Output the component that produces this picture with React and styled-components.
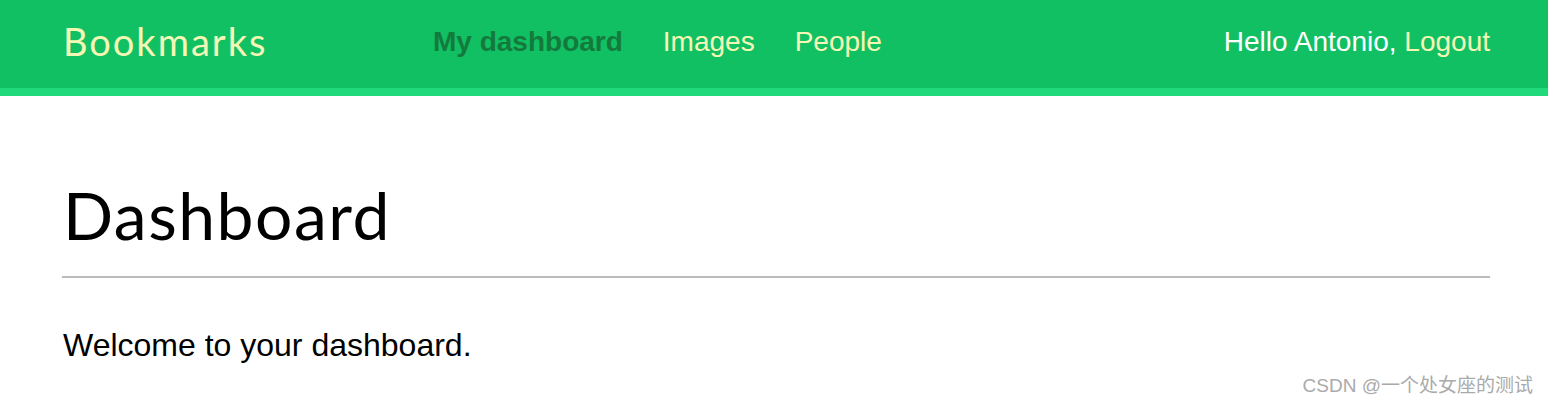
import styled, { createGlobalStyle } from "styled-components";

const GlobalStyle = createGlobalStyle`
  html, body {
    margin: 0;
    padding: 0;
    background: #fff;
  }
  body {
    font-family: "Liberation Sans", Arial, sans-serif;
    color: #000;
  }
`;

const Header = styled.header`
  box-sizing: border-box;
  height: 96px;
  background: #12c064;
  border-bottom: 8px solid #20d97a;
  display: flex;
  align-items: center;
  padding: 0 58px 4px 63px;
`;

const Logo = styled.span`
  font-family: Lato, "Noto Sans", sans-serif;
  font-size: 38px;
  letter-spacing: 2px;
  color: #f5f8b4;
  width: 370px;
  flex-shrink: 0;
  margin-bottom: 3px;
`;

const Menu = styled.nav`
  display: flex;
  gap: 40px;
  flex: 1;
`;

const MenuLink = styled.a`
  font-size: 28px;
  text-decoration: none;
  color: ${(p) => (p.$active ? "#137a3c" : "#f5f8b4")};
  font-weight: ${(p) => (p.$active ? 700 : 400)};
`;

const User = styled.div`
  font-size: 28px;
  color: #fff;
`;

const Logout = styled.a`
  color: #f5f8b4;
  text-decoration: none;
`;

const Content = styled.main`
  padding: 0 58px 0 62px;
`;

const Title = styled.h1`
  font-family: Lato, "Noto Sans", sans-serif;
  font-weight: 400;
  font-size: 66px;
  letter-spacing: 1.5px;
  line-height: 1.2;
  margin: 79px 0 0 0;
  padding: 0 0 22px 1px;
  border-bottom: 2px solid #bbb;
`;

const Welcome = styled.p`
  font-size: 32px;
  margin: 49px 0 0 1px;
`;

const Watermark = styled.div`
  position: absolute;
  right: 15px;
  bottom: 7px;
  font-family: "Liberation Sans", "Noto Sans CJK SC", sans-serif;
  font-size: 19px;
  color: #aaa;
`;

const App = () => {
  return (
    <>
      <GlobalStyle />
      <Header>
        <Logo>Bookmarks</Logo>
        <Menu>
          <MenuLink $active href="#">My dashboard</MenuLink>
          <MenuLink href="#">Images</MenuLink>
          <MenuLink href="#">People</MenuLink>
        </Menu>
        <User>
          Hello Antonio, <Logout href="#">Logout</Logout>
        </User>
      </Header>
      <Content>
        <Title>Dashboard</Title>
        <Welcome>Welcome to your dashboard.</Welcome>
      </Content>
      <Watermark>CSDN @一个处女座的测试</Watermark>
    </>
  );
};

export default App;
